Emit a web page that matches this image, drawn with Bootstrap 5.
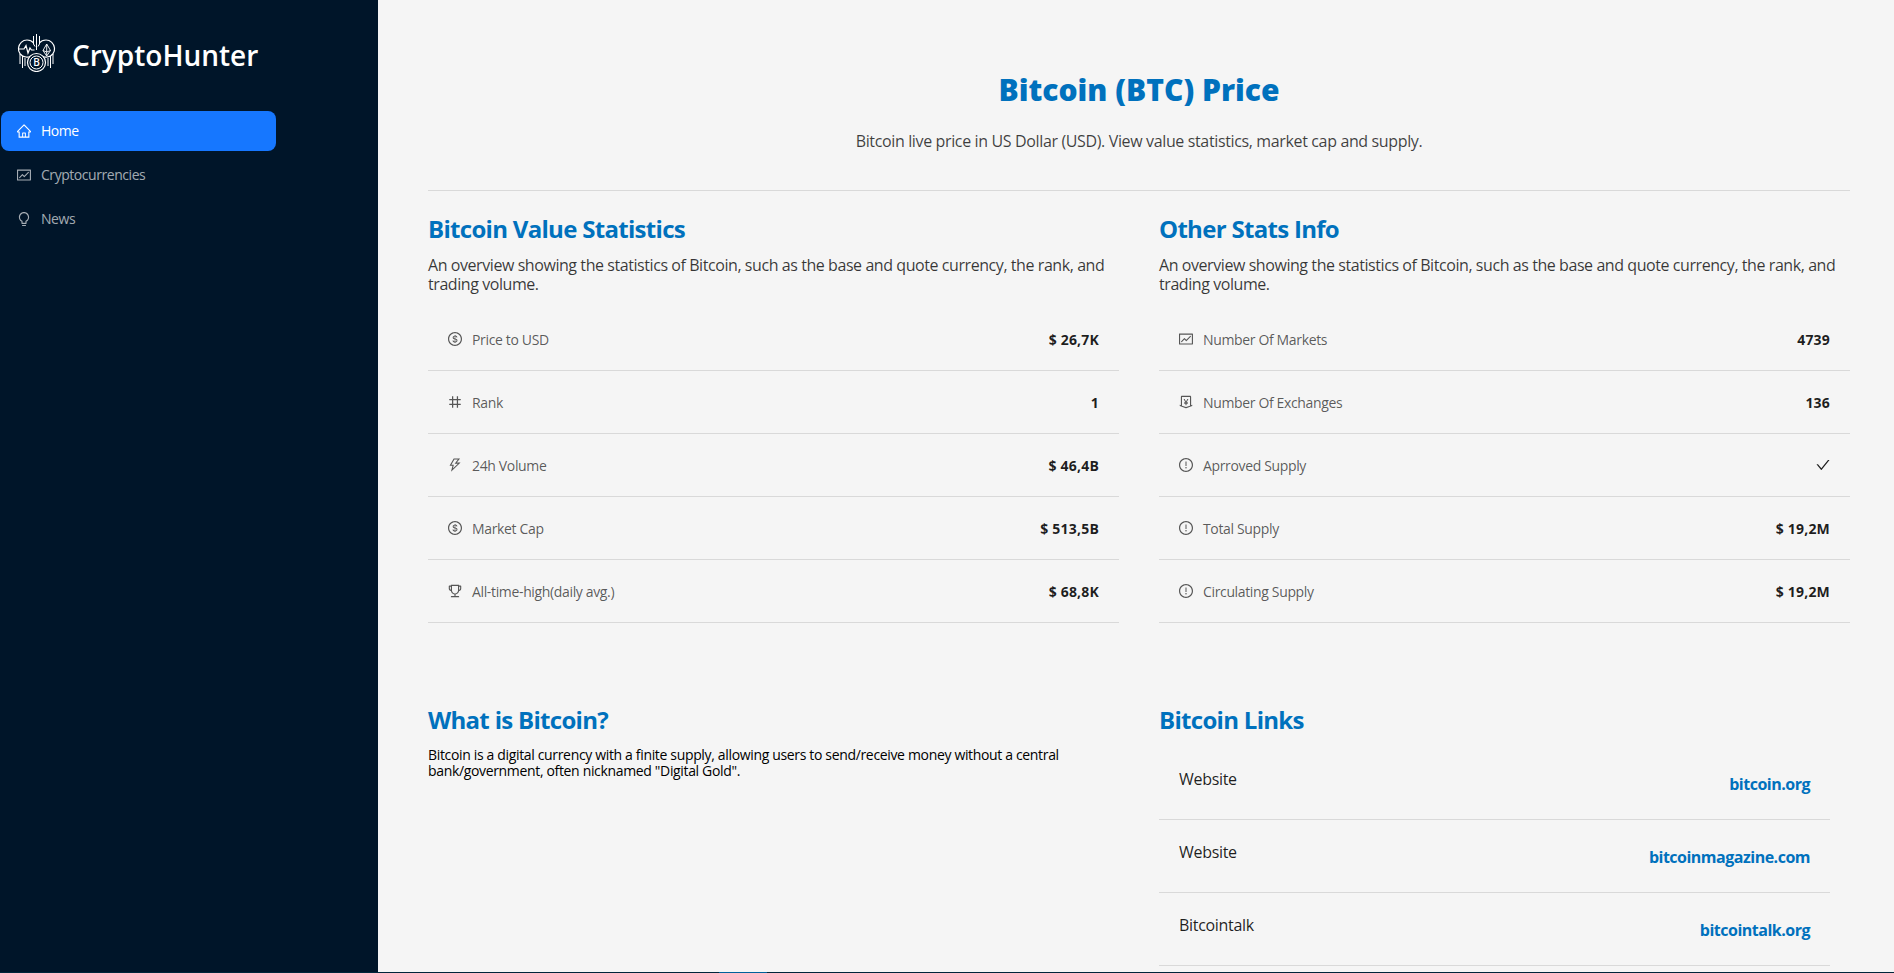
<!DOCTYPE html>
<html lang="en">

<head>
    <meta charset="utf-8" />
    <meta name="viewport" content="width=device-width, initial-scale=1" />
    <title>CryptoHunter</title>
    <link href="https://cdn.jsdelivr.net/npm/bootstrap@5.3.3/dist/css/bootstrap.min.css" rel="stylesheet" />
    <style>
        body {
            height: 100vh;
            overflow: hidden;
            font-family: "Open Sans", "Noto Sans", sans-serif;
            background: #f5f5f5;
        }

        .side-rail {
            width: 378px;
            flex: none;
            background: #001529;
        }

        .brand-row {
            height: 111px;
            padding: 33px 0 0 17px;
            gap: 16px;
            color: #fff;
        }

        .brand-name {
            font-size: 28px;
            font-weight: 600;
            line-height: 44px;
            height: 44px;
        }

        .rail-menu {
            width: 275px;
            gap: 4px;
            margin-left: 1px;
        }

        .rail-menu .nav-link {
            height: 40px;
            padding: 0 16px 1px;
            gap: 10px;
            border-radius: 8px;
            color: rgba(255, 255, 255, .65);
            font-size: 14px;
            letter-spacing: -.45px;
        }

        .rail-menu .nav-link.active {
            background: #1677ff;
            color: #fff;
        }

        .rail-menu svg {
            width: 14px;
            height: 14px;
        }

        .content-pane {
            padding: 70px 44px 0 50px;
            min-width: 0;
        }

        .page-title {
            font-size: 30px;
            line-height: 40px;
            font-weight: 800;
            color: #0071bd;
            margin: 0;
        }

        .page-sub {
            font-size: 16px;
            line-height: 22px;
            margin: 20px 0 38px;
            color: rgba(0, 0, 0, .75);
            letter-spacing: -.36px;
        }

        .rule {
            margin: 0 0 22px;
            border-top: 1px solid #d9d9d9;
            opacity: 1;
        }

        .stat-grid {
            --bs-gutter-x: 40px;
        }

        .block-title {
            font-size: 24px;
            line-height: 32px;
            font-weight: 700;
            color: #0071bd;
            margin: 0;
            letter-spacing: -.7px;
        }

        .block-text {
            font-size: 16px;
            line-height: 19px;
            margin: 11px 0 14px;
            color: rgba(0, 0, 0, .78);
            letter-spacing: -.43px;
        }

        .stat-row {
            height: 63px;
            padding: 0 20px 0 20px;
            border-bottom: 1px solid #d9d9d9;
            font-size: 14px;
        }

        .stat-name {
            gap: 10px;
            color: rgba(0, 0, 0, .65);
            letter-spacing: -.35px;
        }

        .stat-name svg {
            width: 14px;
            height: 14px;
        }

        .stat-val {
            font-weight: 700;
            color: rgba(0, 0, 0, .88);
            letter-spacing: .2px;
        }

        .stat-val svg {
            width: 14px;
            height: 14px;
            display: block;
        }

        .lower-title {
            margin-top: 81px;
        }

        .about-text {
            font-size: 14px;
            line-height: 16px;
            margin: 11px 0 0;
            color: #000;
            letter-spacing: -.34px;
        }

        .link-list {
            width: 671px;
            margin-top: 11px;
        }

        .link-row {
            height: 73px;
            padding: 0 20px;
            border-bottom: 1px solid #d9d9d9;
        }

        .link-name {
            font-size: 16px;
            font-weight: 500;
            color: rgba(0, 0, 0, .88);
            margin-bottom: 8px;
            letter-spacing: -.3px;
        }

        .link-url {
            font-size: 16px;
            font-weight: 700;
            color: #0071bd;
            text-decoration: none;
            letter-spacing: -.5px;
            margin-top: 1px;
        }

        .edge-strip {
            height: 1px;
            background: linear-gradient(90deg, #00263b 719px, #00629b 719px, #00629b 767px, #00263b 767px);
        }
    </style>
</head>

<body class="d-flex">

    <svg width="0" height="0" class="position-absolute">
        <symbol id="i-home" viewBox="64 64 896 896"><path fill="currentColor" d="M946.5 505L560.1 118.8l-25.9-25.9a31.5 31.5 0 0 0-44.4 0L77.5 505a63.9 63.9 0 0 0-18.8 46c.4 35.2 29.7 63.3 64.9 63.3h42.5V940h691.8V614.3h43.4c17.1 0 33.2-6.7 45.3-18.8a63.6 63.6 0 0 0 18.7-45.3c0-17-6.7-33.1-18.8-45.2zM568 868H456V664h112v204zm217.9-325.7V868H632V640c0-22.1-17.9-40-40-40H432c-22.1 0-40 17.9-40 40v228H238.1V542.3h-96l370-369.7 23.1 23.1L882 542.3h-96.1z"/></symbol>
        <symbol id="i-fund" viewBox="64 64 896 896"><path fill="currentColor" d="M926 164H94c-17.7 0-32 14.3-32 32v640c0 17.7 14.3 32 32 32h832c17.7 0 32-14.3 32-32V196c0-17.7-14.3-32-32-32zm-40 632H134V236h752v560zm-658.9-82.3c3.1 3.1 8.2 3.1 11.3 0l172.5-172.5 114.4 114.5c3.1 3.1 8.2 3.1 11.3 0l297-297.2c3.1-3.1 3.1-8.2 0-11.3l-36.8-36.8a8.03 8.03 0 0 0-11.3 0L531 565 416.6 450.5a8.03 8.03 0 0 0-11.3 0l-214.9 215a8.03 8.03 0 0 0 0 11.3l36.7 36.9z"/></symbol>
        <symbol id="i-bulb" viewBox="64 64 896 896"><path fill="currentColor" d="M632 888H392c-4.4 0-8 3.6-8 8v32c0 17.7 14.3 32 32 32h192c17.7 0 32-14.3 32-32v-32c0-4.4-3.6-8-8-8zM512 64c-181.1 0-328 146.9-328 328 0 121.4 66 227.4 164 284.1V792c0 17.7 14.3 32 32 32h264c17.7 0 32-14.3 32-32V676.1c98-56.7 164-162.7 164-284.1 0-181.1-146.9-328-328-328zm127.9 549.8L604 634.6V752H420V634.6l-35.9-20.8C305.4 568.3 256 484.5 256 392c0-141.4 114.6-256 256-256s256 114.6 256 256c0 92.5-49.4 176.3-128.1 221.8z"/></symbol>
        <symbol id="i-dollar" viewBox="64 64 896 896"><path fill="currentColor" d="M512 64C264.6 64 64 264.6 64 512s200.6 448 448 448 448-200.6 448-448S759.4 64 512 64zm0 820c-205.4 0-372-166.6-372-372s166.6-372 372-372 372 166.6 372 372-166.6 372-372 372zm47.7-395.2l-25.4-5.9V348.6c38 5.2 61.5 29 65.5 58.2.5 4 3.9 6.9 7.9 6.9h44.9c4.7 0 8.4-4.1 8-8.8-6.1-62.3-57.4-102.3-125.9-109.2V263c0-4.4-3.6-8-8-8h-28.1c-4.4 0-8 3.6-8 8v33c-70.8 6.9-126.2 46-126.2 119 0 67.6 49.8 100.2 102.1 112.7l24.7 6.3v142.7c-44.2-5.9-69-29.5-74.1-61.3-.6-3.8-4-6.6-7.9-6.6H363c-4.7 0-8.4 4-8 8.7 4.5 55 46.2 105.6 135.2 112.1V761c0 4.4 3.6 8 8 8h28.4c4.4 0 8-3.6 8-8.1l-.2-31.7c78.3-6.9 134.3-48.8 134.3-124-.1-69.4-44.2-100.4-109-116.4zm-68.6-16.2c-5.6-1.6-10.3-3.1-15-5-33.8-12.2-49.5-31.9-49.5-57.3 0-36.3 27.5-57 64.5-61.7v124zM534.3 677V543.3c3.1.9 5.9 1.6 8.8 2.2 47.3 14.4 63.2 34.4 63.2 65.1 0 39.1-29.4 62.6-72 66.4z"/></symbol>
        <symbol id="i-number" viewBox="64 64 896 896"><path fill="currentColor" d="M872 394c4.4 0 8-3.6 8-8v-60c0-4.4-3.6-8-8-8H708V152c0-4.4-3.6-8-8-8h-64c-4.4 0-8 3.6-8 8v166H400V152c0-4.4-3.6-8-8-8h-64c-4.4 0-8 3.6-8 8v166H152c-4.4 0-8 3.6-8 8v60c0 4.4 3.6 8 8 8h168v236H152c-4.4 0-8 3.6-8 8v60c0 4.4 3.6 8 8 8h168v166c0 4.4 3.6 8 8 8h64c4.4 0 8-3.6 8-8V706h228v166c0 4.4 3.6 8 8 8h64c4.4 0 8-3.6 8-8V706h164c4.4 0 8-3.6 8-8v-60c0-4.4-3.6-8-8-8H708V394h164zM628 630H400V394h228v236z"/></symbol>
        <symbol id="i-bolt" viewBox="64 64 896 896"><path fill="currentColor" d="M848 359.3H627.7L825.8 109c4.1-5.3.4-13-6.3-13H436c-2.8 0-5.5 1.5-6.9 4L170 547.5c-3.1 5.3.7 12 6.9 12h174.4l-89.4 357.6c-1.9 7.8 7.5 13.3 13.3 7.7L853.5 373c5.2-4.9 1.7-13.7-5.5-13.7zM378.2 732.5l60.3-241H281.1l189.6-327.4h224.6L487 427.4h211L378.2 732.5z"/></symbol>
        <symbol id="i-trophy" viewBox="64 64 896 896"><path fill="currentColor" d="M868 160h-92v-40c0-4.4-3.6-8-8-8H256c-4.4 0-8 3.6-8 8v40h-92a44 44 0 0 0-44 44v148c0 81.7 60 149.6 138.2 162C265.7 630.2 359 721.7 476 734.5v105.2H280c-17.7 0-32 14.3-32 32V904c0 4.4 3.6 8 8 8h512c4.4 0 8-3.6 8-8v-32.3c0-17.7-14.3-32-32-32H548V734.5C665 721.7 758.3 630.2 773.8 514 852 501.6 912 433.7 912 352V204a44 44 0 0 0-44-44zM184 352V232h64v207.6a91.99 91.99 0 0 1-64-87.6zm520 128c0 49.1-19.1 95.4-53.9 130.1-34.8 34.8-81 53.9-130.1 53.9h-16c-49.1 0-95.4-19.1-130.1-53.9-34.8-34.8-53.9-81-53.9-130.1V184h384v296zm136-128c0 41-26.9 75.8-64 87.6V232h64v120z"/></symbol>
        <symbol id="i-collect" viewBox="64 64 896 896"><path fill="currentColor" d="M911.5 700.7a8 8 0 0 0-10.3-4.8L840 718.2V180c0-37.6-30.4-68-68-68H252c-37.6 0-68 30.4-68 68v538.2l-61.3-22.3c-.9-.3-1.8-.5-2.7-.5-4.4 0-8 3.6-8 8V763c0 3.3 2.1 6.3 5.3 7.5L501 910.1c7.1 2.6 14.8 2.6 21.9 0l383.8-139.5c3.2-1.2 5.3-4.2 5.3-7.5v-59.6c0-1-.2-1.9-.5-2.8zM512 837.5l-256-93.1V184h512v560.4l-256 93.1zM660.6 312h-54.5c-3 0-5.8 1.7-7.1 4.4l-84.7 168H511l-84.7-168a8 8 0 0 0-7.1-4.4h-55.7c-1.3 0-2.6.3-3.8 1-3.9 2.1-5.3 7-3.2 10.8l103.9 191.6h-57c-4.4 0-8 3.6-8 8v27.1c0 4.4 3.6 8 8 8h76v39h-76c-4.4 0-8 3.6-8 8v27.1c0 4.4 3.6 8 8 8h76V704c0 4.4 3.6 8 8 8h49.9c4.4 0 8-3.6 8-8v-63.5h76.3c4.4 0 8-3.6 8-8v-27.1c0-4.4-3.6-8-8-8h-76.3v-39h76.3c4.4 0 8-3.6 8-8v-27.1c0-4.4-3.6-8-8-8H564l103.7-191.6c.6-1.2 1-2.5 1-3.8-.1-4.3-3.7-7.9-8.1-7.9z"/></symbol>
        <symbol id="i-warn" viewBox="64 64 896 896"><path fill="currentColor" d="M512 64C264.6 64 64 264.6 64 512s200.6 448 448 448 448-200.6 448-448S759.4 64 512 64zm0 820c-205.4 0-372-166.6-372-372s166.6-372 372-372 372 166.6 372 372-166.6 372-372 372z"/><path fill="currentColor" d="M464 688a48 48 0 1 0 96 0 48 48 0 1 0-96 0zm24-112h48c4.4 0 8-3.6 8-8V296c0-4.4-3.6-8-8-8h-48c-4.4 0-8 3.6-8 8v272c0 4.4 3.6 8 8 8z"/></symbol>
        <symbol id="i-check" viewBox="64 64 896 896"><path fill="currentColor" d="M912 190h-69.9c-9.8 0-19.1 4.5-25.1 12.2L404.7 724.5 207 474a32 32 0 0 0-25.1-12.2H112c-6.7 0-10.4 7.7-6.3 12.9l273.9 347c12.8 16.2 37.4 16.2 50.3 0l488.4-618.9c4.1-5.1.4-12.8-6.3-12.8z"/></symbol>
    </svg>

    <aside class="side-rail">
        <div class="brand-row d-flex align-items-start">
            <!-- logo: pulse, coin and diamond hanging from a circuit stem -->
            <svg width="39" height="39" viewBox="0 0 39 39" fill="none" stroke="#fff" stroke-width="1">
                <path d="M13 23.500C12 24 10.500 24.500 9 24C4 23.500 1 19.500 1.500 15C2 10.500 5.500 7 10 7C12.500 7 15 8 16.500 10" stroke-width="1.200" />
                <path d="M26 23.500C27 24 28.500 24.500 30 24C35 23.500 38 19.500 37.500 15C37 10.500 33.500 7 29 7C26.500 7 24 8 22.500 10" stroke-width="1.200" />
                <path d="M19.500 1V17M16.500 3V11L18 13.500M22.500 3V11L21 13.500" />
                <path d="M2 16H7L9 12.500L11 20L13 15L14.500 17H17.500" stroke-width="1.200" />
                <path d="M29.700 11L33.500 17.500L29.700 23L26 17.500ZM26 17.500L29.700 19L33.500 17.500M29.700 11V23" stroke-width=".9" />
                <circle cx="19.500" cy="29.500" r="9" stroke-width="1.200" />
                <circle cx="19.500" cy="29.500" r="6.500" />
                <text x="19.500" y="33.300" text-anchor="middle" font-size="10" font-weight="600" fill="#fff" stroke="none" font-family="Open Sans">B</text>
                <path d="M3 21V31M5.500 23V35M8 25V33M36 21V31M33.500 23V35M31 25V33" />
            </svg>
            <div class="brand-name">CryptoHunter</div>
        </div>
        <nav class="nav flex-column rail-menu">
            <a class="nav-link active d-flex align-items-center" href="#"><svg><use href="#i-home" /></svg>Home</a>
            <a class="nav-link d-flex align-items-center" href="#"><svg><use href="#i-fund" /></svg>Cryptocurrencies</a>
            <a class="nav-link d-flex align-items-center" href="#"><svg><use href="#i-bulb" /></svg>News</a>
        </nav>
    </aside>

    <main class="content-pane flex-grow-1">
        <h1 class="page-title text-center">Bitcoin (BTC) Price</h1>
        <p class="page-sub text-center">Bitcoin live price in US Dollar (USD). View value statistics, market cap and supply.</p>
        <hr class="rule" />

        <div class="row stat-grid" id="stats"></div>

        <div class="row stat-grid">
            <div class="col-6">
                <h2 class="block-title lower-title">What is Bitcoin?</h2>
                <p class="about-text">Bitcoin is a digital currency with a finite supply, allowing users to send/receive money without a central bank/government, often nicknamed "Digital Gold".</p>
            </div>
            <div class="col-6">
                <h2 class="block-title lower-title">Bitcoin Links</h2>
                <div class="link-list" id="links"></div>
            </div>
        </div>
    </main>

    <div class="edge-strip fixed-bottom"></div>

    <script>
        const overview = "An overview showing the statistics of Bitcoin, such as the base and quote currency, the rank, and trading volume.";
        const statBlocks = [
            {
                title: "Bitcoin Value Statistics",
                rows: [
                    ["i-dollar", "Price to USD", "$ 26,7K"],
                    ["i-number", "Rank", "1"],
                    ["i-bolt", "24h Volume", "$ 46,4B"],
                    ["i-dollar", "Market Cap", "$ 513,5B"],
                    ["i-trophy", "All-time-high(daily avg.)", "$ 68,8K"],
                ],
            },
            {
                title: "Other Stats Info",
                rows: [
                    ["i-fund", "Number Of Markets", "4739"],
                    ["i-collect", "Number Of Exchanges", "136"],
                    ["i-warn", "Aprroved Supply", '<svg><use href="#i-check" /></svg>'],
                    ["i-warn", "Total Supply", "$ 19,2M"],
                    ["i-warn", "Circulating Supply", "$ 19,2M"],
                ],
            },
        ];
        const links = [
            ["Website", "bitcoin.org"],
            ["Website", "bitcoinmagazine.com"],
            ["Bitcointalk", "bitcointalk.org"],
        ];

        document.getElementById("stats").innerHTML = statBlocks.map((block) => `
            <div class="col-6">
                <h2 class="block-title">${block.title}</h2>
                <p class="block-text">${overview}</p>
                ${block.rows.map((r) => `
                    <div class="stat-row d-flex justify-content-between align-items-center">
                        <div class="stat-name d-flex align-items-center"><svg><use href="#${r[0]}" /></svg>${r[1]}</div>
                        <div class="stat-val">${r[2]}</div>
                    </div>`).join("")}
            </div>`).join("");

        document.getElementById("links").innerHTML = links.map((l) => `
            <div class="link-row d-flex justify-content-between align-items-center">
                <div class="link-name">${l[0]}</div>
                <a class="link-url" href="#">${l[1]}</a>
            </div>`).join("");
    </script>

    <script src="https://cdn.jsdelivr.net/npm/bootstrap@5.3.3/dist/js/bootstrap.bundle.min.js"></script>
</body>

</html>
